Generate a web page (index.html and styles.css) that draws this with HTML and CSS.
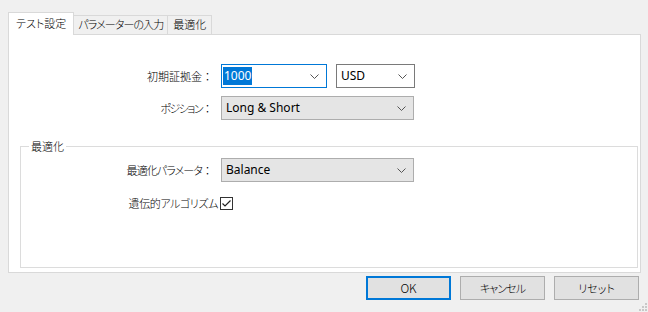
FILE: index.html
```html
<!DOCTYPE html>
<html lang="ja">
<head>
<meta charset="utf-8">
<link rel="stylesheet" href="styles.css">
</head>
<body>
<div class="window">
  <div class="tabs">
    <div class="tab active">テスト設定</div>
    <div class="tab tab-params">パラメーターの入力</div>
    <div class="tab tab-opt">最適化</div>
  </div>
  <div class="panel">
    <div class="form">
      <div class="label">初期証拠金<span class="colon">：</span></div>
      <div class="controls">
        <div class="combo focus w-deposit"><span class="sel">1000</span><svg class="chev" width="9" height="5" viewBox="0 0 9 5"><polyline points="0.5,0.5 4.5,4.5 8.5,0.5" fill="none" stroke="#555" stroke-width="1"/></svg></div>
        <div class="combo w-cur"><span class="val">USD</span><svg class="chev" width="9" height="5" viewBox="0 0 9 5"><polyline points="0.5,0.5 4.5,4.5 8.5,0.5" fill="none" stroke="#555" stroke-width="1"/></svg></div>
      </div>
      <div class="label kana-tight">ポジション<span class="colon">：</span></div>
      <div class="controls">
        <div class="combo ro w-full"><span class="val">Long &amp; Short</span><svg class="chev" width="9" height="5" viewBox="0 0 9 5"><polyline points="0.5,0.5 4.5,4.5 8.5,0.5" fill="none" stroke="#555" stroke-width="1"/></svg></div>
      </div>
    </div>
    <fieldset class="group">
      <legend>最適化</legend>
      <div class="form inner">
        <div class="label kana-mid">最適化パラメータ<span class="colon">：</span></div>
        <div class="controls">
          <div class="combo ro w-full"><span class="val">Balance</span><svg class="chev" width="9" height="5" viewBox="0 0 9 5"><polyline points="0.5,0.5 4.5,4.5 8.5,0.5" fill="none" stroke="#555" stroke-width="1"/></svg></div>
        </div>
      </div>
      <div class="check-row">
        <span class="kana-light">遺伝的アルゴリズム</span>
        <span class="checkbox"><svg width="11" height="11" viewBox="0 0 11 11"><polyline points="1.5,5.5 4,8 9.5,2.5" fill="none" stroke="#222" stroke-width="1.2"/></svg></span>
      </div>
    </fieldset>
  </div>
  <div class="buttons">
    <div class="btn default">OK</div>
    <div class="btn kana-mid">キャンセル</div>
    <div class="btn">リセット</div>
  </div>
  <svg class="grip" width="8" height="8" viewBox="0 0 8 8">
    <rect x="6" y="0" width="2" height="2" fill="#c8c8c8"/>
    <rect x="3" y="3" width="2" height="2" fill="#c8c8c8"/>
    <rect x="6" y="3" width="2" height="2" fill="#c8c8c8"/>
    <rect x="0" y="6" width="2" height="2" fill="#c8c8c8"/>
    <rect x="3" y="6" width="2" height="2" fill="#c8c8c8"/>
    <rect x="6" y="6" width="2" height="2" fill="#c8c8c8"/>
  </svg>
</div>
</body>
</html>
```
FILE: styles.css
```css
html, body {
  margin: 0;
  padding: 0;
  background: #f0f0f0;
}
body {
  font-family: "Noto Sans CJK JP", "Noto Sans", sans-serif;
  font-size: 11px;
  font-weight: 300;
  font-feature-settings: "palt";
  color: #000;
}
.kana-tight {
  letter-spacing: -1.6px;
}
.kana-mid {
  letter-spacing: -0.9px;
}
.kana-light {
  letter-spacing: -0.4px;
}
.window {
  position: relative;
  width: 648px;
  height: 312px;
  overflow: hidden;
}
.tabs {
  display: flex;
  align-items: flex-end;
  height: 22px;
  padding: 12px 0 0 8px;
}
.tab {
  box-sizing: border-box;
  height: 19px;
  line-height: 17px;
  padding: 0 4px 0 4px;
  border: 1px solid #d9d9d9;
  border-bottom: none;
  border-left: none;
  background: #f0f0f0;
  white-space: nowrap;
}
.tab-params {
  letter-spacing: -0.9px;
  padding: 0 4px 0 4px;
}
.tab-opt {
  padding: 0 5px 0 5px;
}
.tab.active {
  height: 23px;
  margin-bottom: -1px;
  line-height: 21px;
  padding: 0 7px 0 7px;
  background: #fff;
  border-left: 1px solid #d9d9d9;
  position: relative;
  z-index: 1;
}
.panel {
  box-sizing: border-box;
  width: 633px;
  height: 239px;
  margin-left: 8px;
  background: #fff;
  border: 1px solid #d9d9d9;
  padding-top: 29px;
  display: flex;
  flex-direction: column;
}
.form {
  display: grid;
  grid-template-columns: 204px auto;
  column-gap: 8px;
  row-gap: 8px;
  align-items: center;
}
.form.inner {
  grid-template-columns: 192px auto;
}
.label {
  text-align: right;
  white-space: nowrap;
}
.colon {
  font-feature-settings: normal;
  letter-spacing: 0;
}
.controls {
  display: flex;
  gap: 9px;
}
.combo {
  box-sizing: border-box;
  height: 24px;
  border: 1px solid #7a7a7a;
  background: #fff;
  display: flex;
  align-items: center;
  justify-content: space-between;
  padding: 0 7px 0 4px;
  font-family: "Noto Sans", "Noto Sans CJK JP", sans-serif;
  font-size: 12px;
  font-weight: 400;
  letter-spacing: 0;
  font-feature-settings: normal;
}
.combo.focus {
  border-color: #0078d7;
  padding-left: 1px;
}
.combo.ro {
  background: #e5e5e5;
  border-color: #adadad;
}
.w-deposit { width: 106px; }
.w-cur { width: 79px; }
.w-full { width: 193px; }
.sel {
  background: #0078d7;
  color: #fff;
  line-height: 18px;
  padding: 0 1px;
}
.val {
  line-height: 18px;
}
.chev {
  display: block;
}
.group {
  margin: 18px 2px 4px 11px;
  padding: 3px 0 0 0;
  border: 1px solid #dcdcdc;
  flex: 1;
  min-width: 0;
}
.group legend {
  margin-left: 8px;
  padding: 0 2px;
  line-height: 17px;
}
.check-row {
  display: flex;
  justify-content: flex-end;
  align-items: center;
  gap: 2px;
  width: 212px;
  margin-top: 13px;
}
.checkbox {
  box-sizing: border-box;
  width: 13px;
  height: 13px;
  border: 1px solid #333;
  background: #fff;
  display: flex;
}
.buttons {
  display: flex;
  justify-content: flex-end;
  gap: 9px;
  padding: 3px 9px 0 0;
}
.btn {
  box-sizing: border-box;
  width: 85px;
  height: 24px;
  line-height: 22px;
  text-align: center;
  background: #e1e1e1;
  border: 1px solid #adadad;
}
.btn.default {
  border: 2px solid #0078d7;
  line-height: 20px;
  font-size: 12px;
}
.grip {
  position: absolute;
  right: 1px;
  bottom: 1px;
}
```
